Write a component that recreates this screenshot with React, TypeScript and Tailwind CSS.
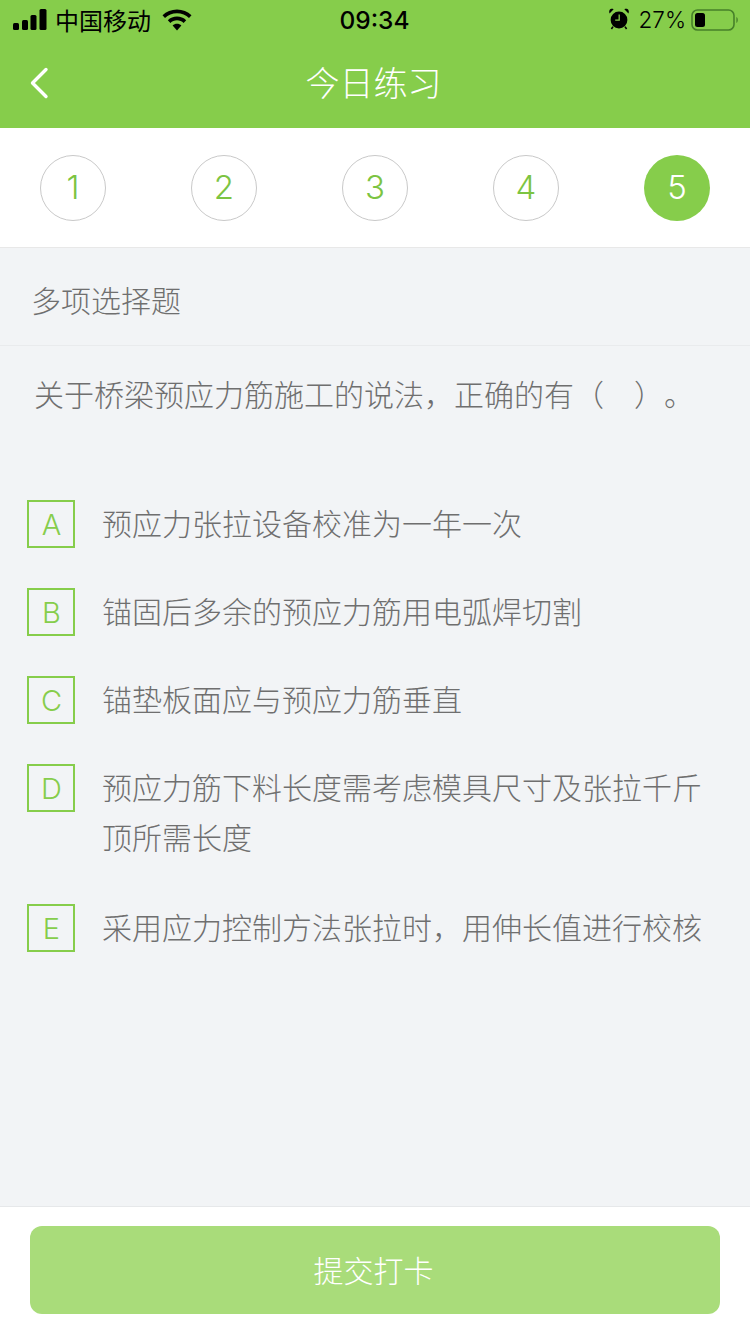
const options = [
  { key: "A", text: "预应力张拉设备校准为一年一次", extra: "" },
  { key: "B", text: "锚固后多余的预应力筋用电弧焊切割", extra: "" },
  { key: "C", text: "锚垫板面应与预应力筋垂直", extra: "" },
  { key: "D", text: "预应力筋下料长度需考虑模具尺寸及张拉千斤顶所需长度", extra: "pb-[3px]" },
  { key: "E", text: "采用应力控制方法张拉时，用伸长值进行校核", extra: "" },
];

const cjk = "font-['Noto_Sans_CJK_SC','Noto_Sans',sans-serif]";

function SignalIcon() {
  return (
    <svg width="34" height="22" viewBox="0 0 34 22" fill="#000">
      <rect x="0" y="14" width="6" height="7" rx="1.5" />
      <rect x="9" y="11" width="6" height="10" rx="1.5" />
      <rect x="17.5" y="6" width="6" height="15" rx="1.5" />
      <rect x="26.5" y="0" width="7" height="21" rx="1.5" />
    </svg>
  );
}

function WifiIcon() {
  return (
    <svg width="30" height="22" viewBox="0 0 30 22" fill="#000">
      <path d="M15 0.5C9.4 0.5 4.3 2.7 0.5 6.3L3 9C6.1 6 10.3 4.2 15 4.2S23.9 6 27 9l2.5-2.7C25.7 2.7 20.6 0.5 15 0.5Z" />
      <path d="M15 7.6c-3.5 0-6.8 1.4-9.2 3.6l2.6 2.7c1.7-1.6 4-2.6 6.6-2.6s4.9 1 6.6 2.6l2.6-2.7C21.8 9 18.5 7.6 15 7.6Z" />
      <path d="M15 14.8c-1.7 0-3.2 0.6-4.4 1.7L15 21.5l4.4-5C18.2 15.4 16.7 14.8 15 14.8Z" />
    </svg>
  );
}

function AlarmIcon() {
  return (
    <svg width="20" height="22" viewBox="0 0 20 22" fill="#000">
      <circle cx="10" cy="12" r="8.4" />
      <path d="M0.6 5.4 4.6 1.2C3.2 0.4 1.2 0.8 0.5 2.2 0.1 3.2 0.1 4.4 0.6 5.4Z" />
      <path d="M19.4 5.4 15.4 1.2c1.4-0.8 3.4-0.4 4.1 1 0.4 1 0.4 2.2-0.1 3.2Z" />
      <path d="M4 18.6 2.4 21M16 18.6 17.6 21" stroke="#000" strokeWidth="1.6" />
      <path d="M10.2 6.6v5.6h-4" fill="none" stroke="#86cd4b" strokeWidth="1.3" />
    </svg>
  );
}

function BatteryIcon() {
  return (
    <svg width="47" height="22" viewBox="0 0 47 22" fill="none">
      <rect x="1" y="1" width="42" height="20" rx="5.5" stroke="#47802a" strokeWidth="1.6" />
      <rect x="4" y="4" width="10" height="14" rx="2.5" fill="#000" />
      <path d="M45.4 8v6c0.9-0.4 1.4-1.6 1.4-3s-0.5-2.6-1.4-3Z" fill="#47802a" />
    </svg>
  );
}

function BackIcon() {
  return (
    <svg width="20" height="32" viewBox="0 0 20 32" fill="none">
      <path d="M17 2.5 3.5 16 17 29.5" stroke="#fff" strokeWidth="3.4" strokeLinecap="round" strokeLinejoin="round" />
    </svg>
  );
}

export default function App() {
  return (
    <div className={`flex h-[1334px] w-[750px] flex-col bg-[#f2f4f6] ${cjk}`}>
      <header className="h-[128px] shrink-0 bg-[#86cd4b]">
        <div className="flex h-[40px] items-center justify-between pl-[13px] pr-[12px] text-[24px] leading-none text-black">
          <div className="flex w-[240px] items-center">
            <SignalIcon />
            <span className="ml-[8px] text-[24px] font-normal">中国移动</span>
            <span className="ml-[11px]">
              <WifiIcon />
            </span>
          </div>
          <span className="mr-[2px] font-['Inter',sans-serif] text-[24.5px] font-medium">09:34</span>
          <div className="flex w-[240px] items-center justify-end">
            <span className="-mt-[2px]">
              <AlarmIcon />
            </span>
            <span className="ml-[10px] font-['Inter',sans-serif] text-[22.5px] font-light">27%</span>
            <span className="ml-[5px]">
              <BatteryIcon />
            </span>
          </div>
        </div>
        <div className="relative flex h-[88px] items-center justify-center pb-[4px]">
          <span className="absolute left-[29px] top-[27px]">
            <BackIcon />
          </span>
          <h1 className="mr-[3px] text-[34px] leading-none font-light text-white">今日练习</h1>
        </div>
      </header>

      <nav className="flex h-[120px] shrink-0 items-center justify-between border-b border-[#e8e8e8] bg-white px-[40px]">
        {[1, 2, 3, 4, 5].map((n) => (
          <div
            key={n}
            className={
              n === 5
                ? "flex h-[66px] w-[66px] items-center justify-center rounded-full bg-[#86cd4b] font-['Inter',sans-serif] text-[33px] font-light text-white"
                : "flex h-[66px] w-[66px] items-center justify-center rounded-full border border-[#c9c9c9] font-['Inter',sans-serif] text-[33px] font-light text-[#7cc442]"
            }
          >
            {n}
          </div>
        ))}
      </nav>

      <div className="flex h-[98px] shrink-0 items-center border-b border-[#e9ebed] pl-[31px] pt-[6px] text-[30px] font-light text-[#6f6f6f]">
        多项选择题
      </div>

      <p className="mt-[22px] pl-[34px] text-[30px] leading-[50px] font-light whitespace-pre text-[#6f6f6f] [text-spacing-trim:space-all]">
        关于桥梁预应力筋施工的说法，正确的有（<span className="inline-block w-[30px]" />）。
      </p>

      <ul className="mt-[82px] flex flex-col gap-[40px] pl-[27px] pr-[20px]">
        {options.map((o) => (
          <li key={o.key} className={`flex items-start ${o.extra}`}>
            <span className="flex h-[48px] w-[48px] shrink-0 items-center justify-center border-2 border-[#86cd4b] pl-[1px] pt-[1px] font-['Inter',sans-serif] text-[29px] font-light text-[#86cd4b]">
              {o.key}
            </span>
            <span className="ml-[27px] -mt-[3px] text-[30px] leading-[50px] font-light text-[#6f6f6f]">
              {o.text}
            </span>
          </li>
        ))}
      </ul>

      <footer className="mt-auto flex h-[128px] shrink-0 items-start border-t border-[#e6e8ea] bg-white px-[30px] pt-[19px]">
        <button className="flex h-[88px] w-full items-center justify-center rounded-[12px] bg-[#a9dc7a] pb-[2px] pr-[3px] text-[30px] font-light text-white">
          提交打卡
        </button>
      </footer>
    </div>
  );
}
